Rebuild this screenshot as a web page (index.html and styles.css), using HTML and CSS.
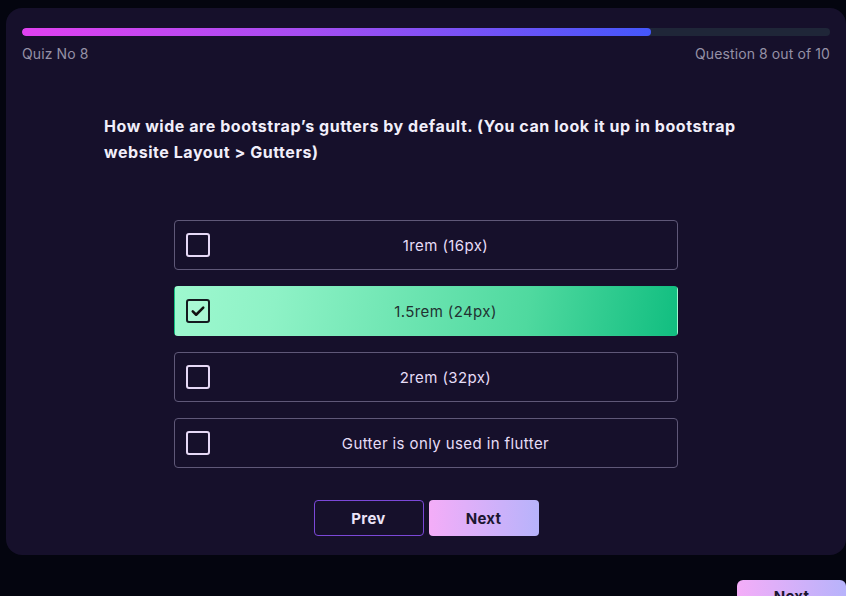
FILE: index.html
```html
<!DOCTYPE html>
<html>
<head>
<meta charset="utf-8">
<link rel="stylesheet" href="styles.css">
</head>
<body>
<div class="page">
  <section class="card">
    <div class="progress"><div class="progress-fill" style="width: 77.8%"></div></div>
    <div class="meta">
      <span>Quiz No 8</span>
      <span>Question 8 out of 10</span>
    </div>
    <h2 class="question">How wide are bootstrap’s gutters by default. (You can look it up in bootstrap website Layout &gt; Gutters)</h2>
    <div class="options">
      <div class="option"><span class="box"></span><span class="label">1rem (16px)</span></div>
      <div class="option selected"><span class="box"><svg viewBox="0 0 24 24" width="18" height="18"><path d="M5 12.5l4.5 4.5L19 7.5" fill="none" stroke="#111" stroke-width="3.4" stroke-linecap="round" stroke-linejoin="round"/></svg></span><span class="label">1.5rem (24px)</span></div>
      <div class="option"><span class="box"></span><span class="label">2rem (32px)</span></div>
      <div class="option"><span class="box"></span><span class="label">Gutter is only used in flutter</span></div>
    </div>
    <div class="nav">
      <button class="btn btn-outline">Prev</button>
      <button class="btn btn-grad">Next</button>
    </div>
  </section>
  <div class="footer">
    <button class="btn btn-grad btn-foot">Next</button>
  </div>
</div>
</body>
</html>
```
FILE: styles.css
```css
* { box-sizing: border-box; }
html, body { margin: 0; padding: 0; background: #04050f; overflow: hidden; }
body { font-family: Inter, "Noto Sans", sans-serif; width: 846px; height: 596px; }
.page { padding: 8px 0 0 6px; }
.card {
  width: 840px;
  height: 547px;
  background: #16102b;
  border-radius: 16px;
  padding: 20px 16px 0 16px;
}
.progress {
  height: 8px;
  background: #1f2638;
  border-radius: 4px;
  overflow: hidden;
}
.progress-fill {
  height: 100%;
  border-radius: 4px;
  background: linear-gradient(90deg, #e041f0 0%, #a64df2 45%, #4457fb 100%);
}
.meta {
  display: flex;
  justify-content: space-between;
  margin-top: 9px;
  color: #9591a6;
  font-size: 14px;
  line-height: 18px;
  letter-spacing: 0.1px;
}
.question {
  width: 644px;
  margin: 50px auto 0;
  color: #f1eefa;
  font-size: 16px;
  font-weight: 700;
  line-height: 26px;
  letter-spacing: 0.55px;
}
.options {
  width: 504px;
  margin: 55px auto 0;
  display: flex;
  flex-direction: column;
  gap: 16px;
}
.option {
  height: 50px;
  border: 1px solid #5f5878;
  border-radius: 4px;
  display: flex;
  align-items: center;
  padding-left: 11px;
  color: #e6ddf7;
  font-size: 15px;
  letter-spacing: 0.4px;
}
.option .label {
  flex: 1;
  text-align: center;
  padding-left: 4px;
}
.box {
  width: 24px;
  height: 24px;
  border: 2px solid #e6d8f6;
  border-radius: 3px;
  display: flex;
  align-items: center;
  justify-content: center;
}
.option.selected {
  border-color: transparent;
  background: linear-gradient(100deg, #9ef8cf 0%, #8ef2c6 20%, #4fd99f 70%, #11be80 100%);
  color: #223232;
}
.option.selected .box {
  border: 2.5px solid #141a1f;
  background: rgba(255,255,255,0.15);
}
.nav {
  display: flex;
  justify-content: center;
  gap: 5px;
  margin-top: 32px;
}
.btn {
  width: 110px;
  height: 36px;
  border-radius: 4px;
  font-family: inherit;
  font-size: 15px;
  font-weight: 700;
  letter-spacing: 0.3px;
  cursor: pointer;
}
.btn-outline {
  background: transparent;
  border: 1px solid #7b48d8;
  color: #ebe3f7;
}
.btn-grad {
  border: none;
  background: linear-gradient(90deg, #f4adf8 0%, #b7b3fb 100%);
  color: #1c1630;
}
.footer {
  display: flex;
  justify-content: flex-end;
  margin-top: 25px;
}
.btn-foot {
  width: 109px;
  border-radius: 6px;
  padding-top: 7px;
  display: flex;
  justify-content: center;
  align-items: flex-start;
}
```
